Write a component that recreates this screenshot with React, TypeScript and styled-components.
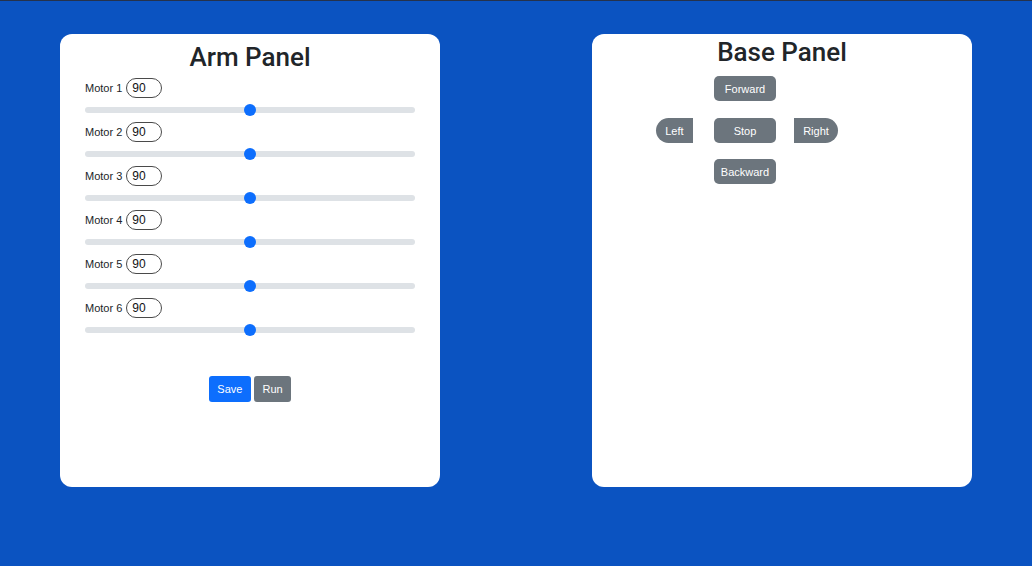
import React from "react";
import styled, { createGlobalStyle } from "styled-components";

const GlobalStyle = createGlobalStyle`
  html, body {
    margin: 0;
    padding: 0;
    background: #0b53c1;
  }
  body {
    font-family: "Liberation Sans", Arial, sans-serif;
    color: #212529;
  }
  * { box-sizing: border-box; }
`;

const Page = styled.div`
  min-height: 566px;
  border-top: 1px solid #25324c;
  background: #0b53c1;
  display: flex;
  justify-content: space-between;
  align-items: flex-start;
  padding: 33px 60px 0;
`;

const Panel = styled.section<{ $top: number }>`
  width: 380px;
  height: 453px;
  background: #ffffff;
  border-radius: 12px;
  padding: ${(p) => p.$top}px 25px 0;
  display: flex;
  flex-direction: column;
`;

const Title = styled.h2<{ $mb: number }>`
  margin: 0 0 ${(p) => p.$mb}px;
  font-family: Roboto, "Liberation Sans", Arial, sans-serif;
  font-size: 26px;
  font-weight: 500;
  line-height: 1.2;
  text-align: center;
  color: #212529;
`;

const MotorRow = styled.div`
  display: flex;
  flex-direction: column;
  height: 44px;
`;

const LabelLine = styled.label`
  display: flex;
  align-items: center;
  gap: 4px;
  height: 20px;
  font-size: 11px;
  color: #212529;
`;

const ValueInput = styled.input`
  width: 36px;
  height: 20px;
  padding: 0 0 0 5px;
  border: 1px solid #4a4a4a;
  border-radius: 10px;
  font-family: "Liberation Sans", Arial, sans-serif;
  font-size: 12px;
  color: #111;
  background: #fff;
  outline: none;
`;

const SliderWrap = styled.div`
  display: flex;
  align-items: center;
  height: 24px;
`;

const Range = styled.input`
  -webkit-appearance: none;
  appearance: none;
  width: 330px;
  height: 12px;
  margin: 0;
  background: transparent;
  &::-webkit-slider-runnable-track {
    height: 6px;
    border-radius: 3px;
    background: #dee2e6;
  }
  &::-webkit-slider-thumb {
    -webkit-appearance: none;
    width: 12px;
    height: 12px;
    margin-top: -3px;
    border-radius: 50%;
    background: #0d6efd;
    border: none;
  }
`;

const ActionBar = styled.div`
  display: flex;
  justify-content: center;
  gap: 3px;
  margin-top: 34px;
`;

const Btn = styled.button<{ $variant: "primary" | "secondary" }>`
  height: 26px;
  padding: 0 8.5px;
  border: none;
  border-radius: 3px;
  font-family: "Liberation Sans", Arial, sans-serif;
  font-size: 11px;
  color: #fff;
  background: ${(p) => (p.$variant === "primary" ? "#0d6efd" : "#6c757d")};
`;

const DriveBtn = styled.button<{ $shape?: "left" | "right" }>`
  height: 25px;
  min-width: ${(p) => (p.$shape ? "0" : "62px")};
  padding: 0 ${(p) => (p.$shape ? "9.2px" : "7px")};
  border: none;
  border-radius: ${(p) =>
    p.$shape === "left"
      ? "12.5px 0 0 12.5px"
      : p.$shape === "right"
      ? "0 12.5px 12.5px 0"
      : "5px"};
  background: #6c757d;
  color: #fff;
  font-family: "Liberation Sans", Arial, sans-serif;
  font-size: 11px;
`;

const DriveArea = styled.div`
  display: grid;
  grid-template-columns: 56px 66px 60px;
  grid-template-rows: 42px 41px 25px;
  margin-left: 39px;
`;

const Cell = styled.div<{ $col: number; $row: number; $align: "start" | "center" | "end" }>`
  grid-column: ${(p) => p.$col};
  grid-row: ${(p) => p.$row};
  display: flex;
  justify-content: ${(p) => (p.$align === "start" ? "flex-start" : p.$align === "end" ? "flex-end" : "center")};
  align-items: flex-start;
`;

const motors = [1, 2, 3, 4, 5, 6];

export default function App() {
  const [values, setValues] = React.useState<number[]>(motors.map(() => 90));
  const set = (i: number, v: number) =>
    setValues((prev) => prev.map((x, j) => (j === i ? v : x)));

  return (
    <>
      <GlobalStyle />
      <Page>
        <Panel $top={8}>
          <Title $mb={5}>Arm Panel</Title>
          {motors.map((m, i) => (
            <MotorRow key={m}>
              <LabelLine>
                Motor {m}
                <ValueInput
                  type="text"
                  value={values[i]}
                  onChange={(e) => set(i, Number(e.target.value) || 0)}
                />
              </LabelLine>
              <SliderWrap>
                <Range
                  type="range"
                  min={0}
                  max={180}
                  value={values[i]}
                  onChange={(e) => set(i, Number(e.target.value))}
                />
              </SliderWrap>
            </MotorRow>
          ))}
          <ActionBar>
            <Btn $variant="primary">Save</Btn>
            <Btn $variant="secondary">Run</Btn>
          </ActionBar>
        </Panel>
        <Panel $top={3}>
          <Title $mb={8}>Base Panel</Title>
          <DriveArea>
            <Cell $col={2} $row={1} $align="center">
              <DriveBtn>Forward</DriveBtn>
            </Cell>
            <Cell $col={1} $row={2} $align="start">
              <DriveBtn $shape="left">Left</DriveBtn>
            </Cell>
            <Cell $col={2} $row={2} $align="center">
              <DriveBtn>Stop</DriveBtn>
            </Cell>
            <Cell $col={3} $row={2} $align="end">
              <DriveBtn $shape="right">Right</DriveBtn>
            </Cell>
            <Cell $col={2} $row={3} $align="center">
              <DriveBtn>Backward</DriveBtn>
            </Cell>
          </DriveArea>
        </Panel>
      </Page>
    </>
  );
}
